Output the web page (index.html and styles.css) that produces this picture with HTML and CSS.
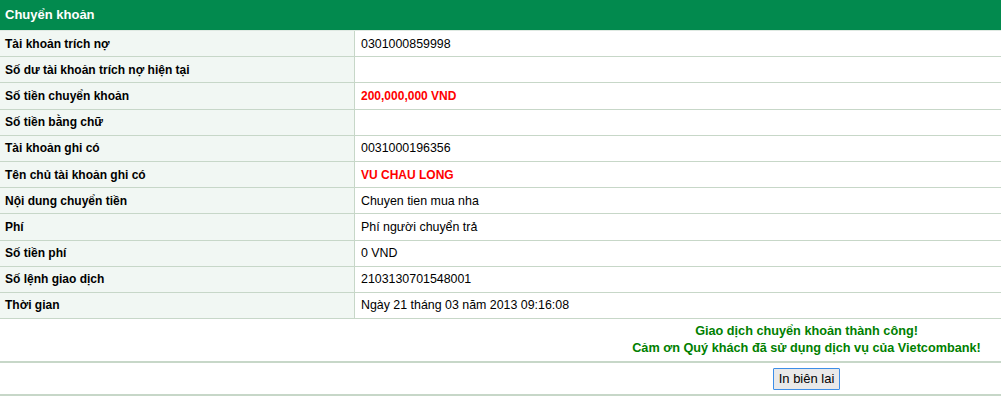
FILE: index.html
```html
<!DOCTYPE html>
<html lang="vi">
<head>
    <meta charset="UTF-8">
    <title>Chuyển khoản</title>
    <link rel="stylesheet" href="styles.css">
</head>
<body>
    <div class="panel">
        <div class="panel-title">Chuyển khoản</div>
        <table class="info">
            <tr><td class="label">Tài khoản trích nợ</td><td>0301000859998</td></tr>
            <tr><td class="label">Số dư tài khoản trích nợ hiện tại</td><td></td></tr>
            <tr><td class="label">Số tiền chuyển khoản</td><td class="red">200,000,000 VND</td></tr>
            <tr><td class="label">Số tiền bằng chữ</td><td></td></tr>
            <tr><td class="label">Tài khoản ghi có</td><td>0031000196356</td></tr>
            <tr><td class="label">Tên chủ tài khoản ghi có</td><td class="red">VU CHAU LONG</td></tr>
            <tr><td class="label">Nội dung chuyển tiền</td><td>Chuyen tien mua nha</td></tr>
            <tr><td class="label">Phí</td><td>Phí người chuyển trả</td></tr>
            <tr><td class="label">Số tiền phí</td><td>0 VND</td></tr>
            <tr><td class="label">Số lệnh giao dịch</td><td>2103130701548001</td></tr>
            <tr><td class="label">Thời gian</td><td>Ngày 21 tháng 03 năm 2013 09:16:08</td></tr>
        </table>
        <div class="message">
            <div>Giao dịch chuyển khoản thành công!</div>
            <div>Cảm ơn Quý khách đã sử dụng dịch vụ của Vietcombank!</div>
        </div>
        <div class="actions">
            <button class="print-btn">In biên lai</button>
        </div>
    </div>
</body>
</html>
```

FILE: styles.css
```css
body {
    margin: 0;
    background: #fff;
    font-family: "Liberation Sans", Arial, sans-serif;
    font-size: 12px;
    color: #000;
}
.panel {
    width: 1001px;
}
.panel-title {
    height: 30px;
    line-height: 29px;
    padding-left: 5px;
    background: #028a4e;
    border-bottom: 1px solid #dfe9e2;
    color: #fff;
    font-weight: bold;
    font-size: 13px;
}
.info {
    width: 100%;
    border-collapse: collapse;
}
.info td {
    height: 25.2px;
    padding: 0 6px;
    border-bottom: 1px solid #c7d7c8;
    vertical-align: middle;
    font-size: 12.4px;
}
.info td.label {
    width: 343px;
    padding-left: 5px;
    background: #f1f7f3;
    border-right: 1px solid #c7d7c8;
    font-weight: bold;
    font-size: 12px;
}
.info td.red {
    color: #ff0000;
    font-weight: bold;
    font-size: 12px;
}
.message {
    height: 42px;
    padding-left: 612px;
    display: flex;
    flex-direction: column;
    justify-content: center;
    align-items: center;
    border-bottom: 2px solid #c7d7c8;
    color: #008000;
    font-weight: bold;
    font-size: 12.7px;
    line-height: 17px;
}
.actions {
    height: 31px;
    padding-left: 612px;
    display: flex;
    align-items: center;
    justify-content: center;
    border-bottom: 2px solid #c7d7c8;
}
.print-btn {
    font-family: "Liberation Sans", Arial, sans-serif;
    font-size: 13px;
    padding: 1px 5px;
    height: 22px;
    background: #e9e9e9;
    border: 1px solid #3d8ee8;
    border-radius: 1px;
    color: #000;
}
```
